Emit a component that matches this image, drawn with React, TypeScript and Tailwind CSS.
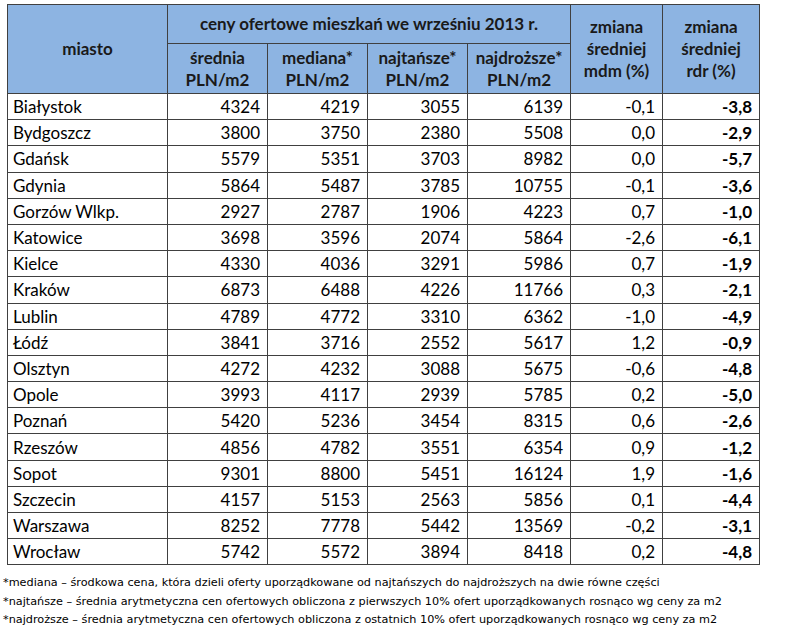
import React from 'react';

type Row = [string, string, string, string, string, string, string];

const rows: Row[] = [
  ['Białystok', '4324', '4219', '3055', '6139', '-0,1', '-3,8'],
  ['Bydgoszcz', '3800', '3750', '2380', '5508', '0,0', '-2,9'],
  ['Gdańsk', '5579', '5351', '3703', '8982', '0,0', '-5,7'],
  ['Gdynia', '5864', '5487', '3785', '10755', '-0,1', '-3,6'],
  ['Gorzów Wlkp.', '2927', '2787', '1906', '4223', '0,7', '-1,0'],
  ['Katowice', '3698', '3596', '2074', '5864', '-2,6', '-6,1'],
  ['Kielce', '4330', '4036', '3291', '5986', '0,7', '-1,9'],
  ['Kraków', '6873', '6488', '4226', '11766', '0,3', '-2,1'],
  ['Lublin', '4789', '4772', '3310', '6362', '-1,0', '-4,9'],
  ['Łódź', '3841', '3716', '2552', '5617', '1,2', '-0,9'],
  ['Olsztyn', '4272', '4232', '3088', '5675', '-0,6', '-4,8'],
  ['Opole', '3993', '4117', '2939', '5785', '0,2', '-5,0'],
  ['Poznań', '5420', '5236', '3454', '8315', '0,6', '-2,6'],
  ['Rzeszów', '4856', '4782', '3551', '6354', '0,9', '-1,2'],
  ['Sopot', '9301', '8800', '5451', '16124', '1,9', '-1,6'],
  ['Szczecin', '4157', '5153', '2563', '5856', '0,1', '-4,4'],
  ['Warszawa', '8252', '7778', '5442', '13569', '-0,2', '-3,1'],
  ['Wrocław', '5742', '5572', '3894', '8418', '0,2', '-4,8'],
];

const notes = [
  '*mediana – środkowa cena, która dzieli oferty uporządkowane od najtańszych do najdroższych na dwie równe części',
  '*najtańsze – średnia arytmetyczna cen ofertowych obliczona z pierwszych 10% ofert uporządkowanych rosnąco wg ceny za m2',
  '*najdroższe – średnia arytmetyczna cen ofertowych obliczona z ostatnich 10% ofert uporządkowanych rosnąco wg ceny za m2',
];

// header cells share the same look
const th = 'border border-[#404040] bg-[#8db4e2] font-bold text-center align-middle leading-[22px] text-[#1a1a1a]';
const td = 'border border-[#404040] px-[7px] text-right align-middle leading-none';

const App = () => {
  return (
    <div className="w-[788px] h-[628px] bg-white overflow-hidden pt-[4px]">
      <table className="ml-[7px] w-[752px] table-fixed border-collapse font-['Lato',sans-serif] text-[17px] text-black">
        <colgroup>
          <col className="w-[160px]" />
          <col className="w-[100px]" />
          <col className="w-[100px]" />
          <col className="w-[100px]" />
          <col className="w-[103px]" />
          <col className="w-[92px]" />
          <col className="w-[97px]" />
        </colgroup>
        <thead>
          <tr className="h-[39px]">
            <th rowSpan={2} className={th}>miasto</th>
            <th colSpan={4} className={th}>ceny ofertowe mieszkań we wrześniu 2013 r.</th>
            <th rowSpan={2} className={th}>zmiana<br />średniej<br />mdm (%)</th>
            <th rowSpan={2} className={th}>zmiana<br />średniej<br />rdr (%)</th>
          </tr>
          <tr className="h-[50px]">
            <th className={th}>średnia<br />PLN/m2</th>
            <th className={th}>mediana*<br />PLN/m2</th>
            <th className={th}>najtańsze*<br />PLN/m2</th>
            <th className={th}>najdroższe*<br />PLN/m2</th>
          </tr>
        </thead>
        <tbody>
          {rows.map((r) => (
            <tr key={r[0]} className="h-[26.2px]">
              <td className="border border-[#404040] pl-[5px] text-left align-middle leading-none">{r[0]}</td>
              <td className={td}>{r[1]}</td>
              <td className={td}>{r[2]}</td>
              <td className={td}>{r[3]}</td>
              <td className={td}>{r[4]}</td>
              <td className={td}>{r[5]}</td>
              <td className={`${td} font-bold`}>{r[6]}</td>
            </tr>
          ))}
        </tbody>
      </table>
      <div className="mt-[9px] pl-[3px] font-['DejaVu_Sans',sans-serif] text-[11.25px] leading-[18.5px] text-black">
        {notes.map((n) => (
          <div key={n} className="whitespace-nowrap">{n}</div>
        ))}
      </div>
    </div>
  );
};

export default App;
